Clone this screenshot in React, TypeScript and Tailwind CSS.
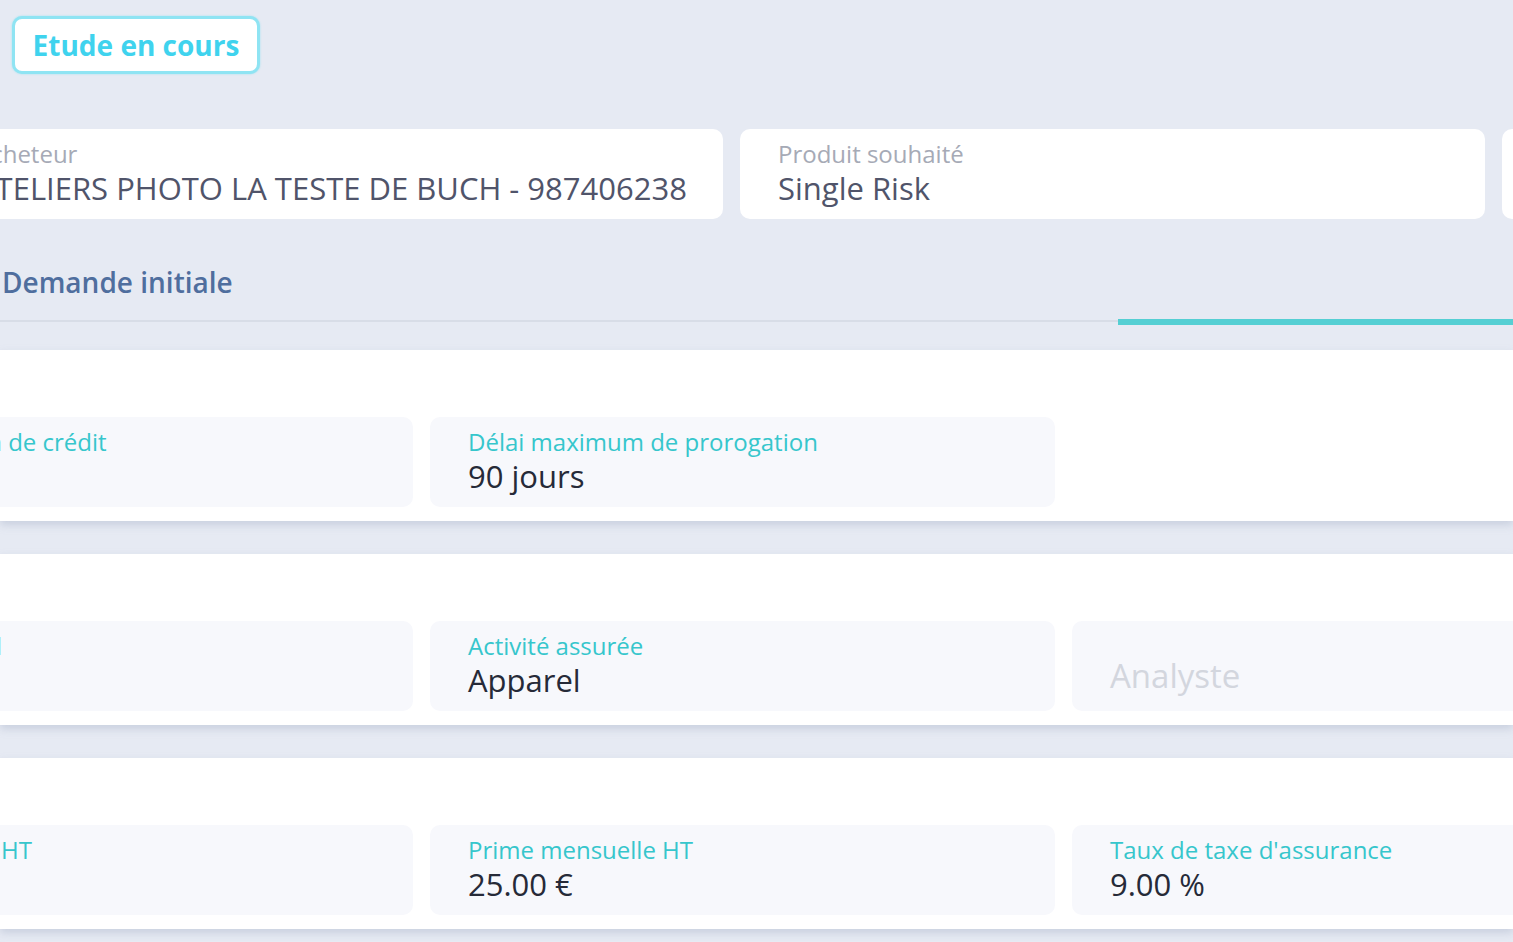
const Field = ({
  label,
  value,
  width,
  tone = 'panel',
}: {
  label?: string;
  value?: string;
  width: string;
  tone?: 'panel' | 'card';
}) => {
  const isCard = tone === 'card';
  return (
    <div
      className={`${width} h-[90px] shrink-0 rounded-[10px] px-[38px] pt-[12px] ${
        isCard ? 'bg-white' : 'bg-[#f7f8fc]'
      }`}
    >
      {label && (
        <div
          className={`text-[24px] leading-[26px] whitespace-nowrap ${
            isCard ? 'text-[#a6aab6]' : 'text-[#36c6cc]'
          }`}
        >
          {label}
        </div>
      )}
      {value && (
        <div
          className={`mt-[2px] text-[31px] leading-[38px] whitespace-nowrap ${
            isCard ? 'text-[#50546a]' : 'text-[#262a38]'
          }`}
        >
          {value}
        </div>
      )}
    </div>
  );
};

const Panel = ({ children }: { children: React.ReactNode }) => (
  <div className="bg-white pt-[67px] pb-[14px] shadow-[0_4px_8px_rgba(150,160,185,0.35)]">
    <div className="-ml-[212px] flex gap-[17px]">{children}</div>
  </div>
);

export default function App() {
  return (
    <div className="w-[1513px] h-[942px] overflow-hidden bg-[#e6eaf3] font-['Open_Sans',sans-serif]">
      {/* Status badge */}
      <div className="pt-[16px] pl-[12px]">
        <div className="w-[248px] h-[58px] flex items-center justify-center rounded-[10px] border-[3px] border-[#8fe4f3] bg-white text-[28px] font-bold text-[#3fd3ee] shadow-[0_0_2px_rgba(100,220,240,0.6)]">
          Etude en cours
        </div>
      </div>

      {/* Summary cards */}
      <div className="mt-[55px] -ml-[62px] flex gap-[17px]">
        <Field
          tone="card"
          width="w-[785px]"
          label="Acheteur"
          value="ATELIERS PHOTO LA TESTE DE BUCH - 987406238"
        />
        <Field tone="card" width="w-[745px]" label="Produit souhaité" value="Single Risk" />
        <Field tone="card" width="w-[400px]" label="Statut" value="" />
      </div>

      {/* Tabs */}
      <div className="mt-[25px] flex h-[78px] border-b-2 border-[#d8dde7]">
        <div className="w-[1118px] shrink-0 flex items-center pl-[2px] text-[28px] font-semibold text-[#4f6e9e]">
          Demande initiale
        </div>
        <div className="flex-1 -mb-[5px] border-b-[6px] border-[#55cfd3]" />
      </div>

      {/* Sections */}
      <div className="mt-[28px] flex flex-col gap-[33px]">
        <Panel>
          <Field width="w-[625px]" label="Délai maximum de crédit" />
          <Field width="w-[625px]" label="Délai maximum de prorogation" value="90 jours" />
        </Panel>
        <Panel>
          <Field width="w-[625px]" label="Métier principal" />
          <Field width="w-[625px]" label="Activité assurée" value="Apparel" />
          <div className="w-[625px] h-[90px] shrink-0 rounded-[10px] bg-[#f7f8fc] px-[38px] flex items-center">
            <span className="text-[33px] text-[#d3d6de] mt-[20px]">Analyste</span>
          </div>
        </Panel>
        <Panel>
          <Field width="w-[625px]" label="Prime annuelle HT" />
          <Field width="w-[625px]" label="Prime mensuelle HT" value="25.00 €" />
          <Field width="w-[625px]" label="Taux de taxe d'assurance" value="9.00 %" />
        </Panel>
      </div>
    </div>
  );
}
